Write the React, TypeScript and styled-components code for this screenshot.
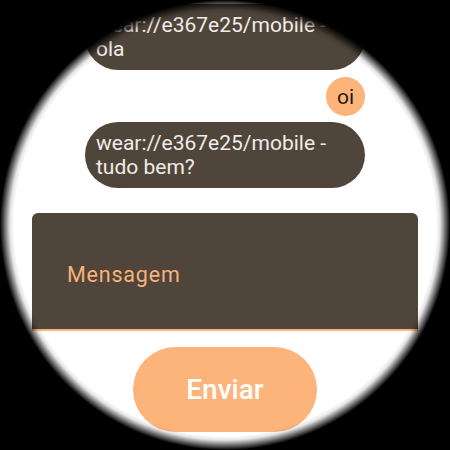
import React from "react";
import styled, { createGlobalStyle } from "styled-components";

const Global = createGlobalStyle`
  html, body { margin: 0; padding: 0; background: #000; }
  body { font-family: Roboto, "Noto Sans", sans-serif; }
`;

const Screen = styled.div`
  position: relative;
  width: 450px;
  height: 450px;
  overflow: hidden;
  background: #ffffff;
`;

const Vignette = styled.div`
  position: absolute;
  inset: 0;
  pointer-events: none;
  background: radial-gradient(
    circle at 225px 225px,
    rgba(0, 0, 0, 0) 211px,
    rgba(0, 0, 0, 0.1) 215px,
    rgba(0, 0, 0, 0.55) 220px,
    #000 225px
  );
`;

const Column = styled.div`
  display: flex;
  flex-direction: column;
  align-items: center;
  padding-top: 4px;
`;

const Messages = styled.div`
  width: 280px;
  display: flex;
  flex-direction: column;
`;

const Bubble = styled.div<{ $gap?: number }>`
  box-sizing: border-box;
  width: 280px;
  min-height: 66px;
  padding: 9px 14px 9px 11px;
  margin-top: ${(p) => p.$gap ?? 0}px;
  border-radius: 33px;
  background: #50453b;
  color: #f1ece7;
  font-size: 21px;
  line-height: 24px;
`;

const OwnBubble = styled.div<{ $gap?: number }>`
  align-self: flex-end;
  width: 39px;
  height: 39px;
  margin-top: ${(p) => p.$gap ?? 0}px;
  border-radius: 50%;
  background: #fdb47b;
  color: #1e1a17;
  font-size: 21px;
  display: flex;
  align-items: center;
  justify-content: center;
`;

const Field = styled.div`
  box-sizing: border-box;
  margin-top: 25px;
  width: 386px;
  height: 118px;
  background: #50453b;
  border-radius: 6px 6px 0 0;
  border-bottom: 2px solid #fdb47b;
  display: flex;
  align-items: center;
  padding-left: 35px;
  padding-top: 6px;
`;

const Placeholder = styled.span`
  color: #f6b37a;
  font-size: 21.5px;
  letter-spacing: 0.8px;
`;

const SendButton = styled.button`
  margin-top: 16px;
  width: 184px;
  height: 85px;
  border: none;
  border-radius: 43px;
  background: #fdb47b;
  color: #ffffff;
  font-family: Roboto, "Noto Sans", sans-serif;
  font-weight: 500;
  font-size: 28px;
  padding: 0 0 1px;
`;

export default function App() {
  return (
    <Screen>
      <Global />
      <Column>
        <Messages>
          <Bubble>wear://e367e25/mobile - ola</Bubble>
          <OwnBubble $gap={7}>oi</OwnBubble>
          <Bubble $gap={6}>wear://e367e25/mobile - tudo bem?</Bubble>
        </Messages>
        <Field>
          <Placeholder>Mensagem</Placeholder>
        </Field>
        <SendButton>Enviar</SendButton>
      </Column>
      <Vignette />
    </Screen>
  );
}
